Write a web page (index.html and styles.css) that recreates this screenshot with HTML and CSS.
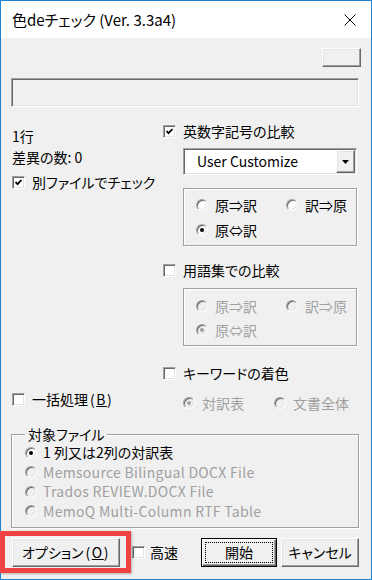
FILE: index.html
```html
<!DOCTYPE html>
<html lang="ja">
<head>
<meta charset="utf-8">
<title>色deチェック</title>
<link rel="stylesheet" href="styles.css">
</head>
<body>
<div class="window">
  <div class="titlebar">
    <span class="title">色deチェック (Ver. 3.3a4)</span>
    <svg class="close" viewBox="0 0 12 12"><path d="M0.5 0.5L11.5 11.5M11.5 0.5L0.5 11.5" stroke="#000" stroke-width="1"/></svg>
  </div>
  <div class="content">
    <div class="btn-small raised"></div>
    <div class="status sunken"></div>
    <div class="main">
      <div class="left">
        <div class="line first">1行</div>
        <div class="line second">差異の数: 0</div>
        <div class="chk sep"><span class="box"><svg viewBox="0 0 11 11"><polyline points="2.5,5 4.5,7.2 8.5,3" fill="none" stroke="#000" stroke-width="1.8"/></svg></span><span>別ファイルでチェック</span></div>
      </div>
      <div class="right">
        <div class="chk"><span class="box"><svg viewBox="0 0 11 11"><polyline points="2.5,5 4.5,7.2 8.5,3" fill="none" stroke="#000" stroke-width="1.8"/></svg></span><span>英数字記号の比較</span></div>
        <div class="combo sunken">
          <span class="combo-text">User Customize</span>
          <span class="combo-btn raised"><svg viewBox="0 0 7 4" class="arrow"><polygon points="0,0 7,0 3.5,4" fill="#000"/></svg></span>
        </div>
        <div class="group">
          <div class="rrow"><span class="opt w90"><span class="radio"></span><span>原⇒訳</span></span><span class="opt"><span class="radio"></span><span>訳⇒原</span></span></div>
          <div class="rrow"><span class="opt"><span class="radio on"></span><span>原⇔訳</span></span></div>
        </div>
        <div class="chk gap15"><span class="box"></span><span>用語集での比較</span></div>
        <div class="group g2 dis">
          <div class="rrow"><span class="opt w90"><span class="radio"></span><span>原⇒訳</span></span><span class="opt"><span class="radio"></span><span>訳⇒原</span></span></div>
          <div class="rrow"><span class="opt"><span class="radio on"></span><span>原⇔訳</span></span></div>
        </div>
        <div class="chk gap18"><span class="box"></span><span>キーワードの着色</span></div>
      </div>
      <div class="chk batch"><span class="box"></span><span>一括処理<span class="paren">(<u>B</u>)</span></span></div>
      <div class="rrow color dis"><span class="opt w91"><span class="radio on"></span><span>対訳表</span></span><span class="opt"><span class="radio"></span><span>文書全体</span></span></div>
    </div>
    <fieldset class="files">
      <legend>対象ファイル</legend>
      <div class="frow"><span class="opt"><span class="radio on"></span><span>1 列又は2列の対訳表</span></span></div>
      <div class="frow dis"><span class="opt"><span class="radio"></span><span>Memsource Bilingual DOCX File</span></span></div>
      <div class="frow dis"><span class="opt"><span class="radio"></span><span>Trados REVIEW.DOCX File</span></span></div>
      <div class="frow dis"><span class="opt"><span class="radio"></span><span>MemoQ Multi-Column RTF Table</span></span></div>
    </fieldset>
    <div class="bottom">
      <div class="btn options raised"><span>オプション<span class="paren">(<u>O</u>)</span></span></div>
      <div class="chk speed"><span class="box"></span><span>高速</span></div>
      <div class="btn start"><span class="focus">開始</span></div>
      <div class="btn cancel raised"><span>キャンセル</span></div>
    </div>
  </div>
  <div class="highlight"></div>
</div>
</body>
</html>
```

FILE: styles.css
```css
* { box-sizing: border-box; }
html, body { margin: 0; padding: 0; }
body {
  width: 372px;
  height: 580px;
  overflow: hidden;
  font-family: "Noto Sans CJK JP", "Noto Sans", sans-serif;
  font-size: 14px;
  color: #000;
  font-feature-settings: "palt";
  background: #f0f0f0;
}
.window {
  position: relative;
  width: 372px;
  height: 580px;
  border: 1px solid #1883d7;
  background: #f0f0f0;
  display: flex;
  flex-direction: column;
}
.titlebar {
  height: 37px;
  flex: none;
  background: #fff;
  display: flex;
  align-items: center;
  padding-left: 11px;
}
.title { font-size: 15px; line-height: 20px; padding-top: 1px; }
.close { margin-left: auto; margin-right: 15px; width: 12px; height: 12px; }

.raised {
  background: #f0f0f0;
  border: 1px solid;
  border-color: #fff #696969 #696969 #fff;
  box-shadow: inset -1px -1px 0 #a0a0a0, inset 1px 1px 0 #e3e3e3;
}
.sunken {
  border: 1px solid;
  border-color: #a0a0a0 #fff #fff #a0a0a0;
  box-shadow: inset 1px 1px 0 #696969, inset -1px -1px 0 #e3e3e3;
}

.content {
  padding: 10px 12px 0 10px;
  display: flex;
  flex-direction: column;
}
.btn-small {
  align-self: flex-end;
  margin-right: -2px;
  width: 39px;
  height: 19px;
}
.status {
  margin-top: 11px;
  height: 29px;
  background: #f0f0f0;
}

.main {
  margin-top: 15px;
  display: grid;
  grid-template-columns: 152px 196px;
  row-gap: 8px;
}
.left { display: flex; flex-direction: column; }
.line { line-height: 17px; height: 17px; padding-left: 1px; }
.line.first { margin-top: 6px; }
.line.second { margin-top: 4px; }
.chk {
  display: flex;
  align-items: center;
  gap: 7px;
  height: 18px;
  line-height: 17px;
}
.chk.sep { margin-top: 7px; margin-left: 1px; }
.box {
  width: 13px;
  height: 13px;
  flex: none;
  background: #fff;
  border: 1px solid;
  border-color: #a0a0a0 #fff #fff #a0a0a0;
  box-shadow: inset 1px 1px 0 #696969, inset -1px -1px 0 #e3e3e3;
  display: flex;
}
.box svg { width: 11px; height: 11px; display: block; }
.paren { letter-spacing: 1.5px; margin-left: 2px; }

.right { display: flex; flex-direction: column; }
.combo {
  margin-top: 8px;
  margin-left: 20px;
  width: 174px;
  height: 27px;
  background: #fff;
  display: flex;
  align-items: center;
  padding: 1px;
}
.combo-text { flex: 1; padding-left: 12px; line-height: 17px; }
.combo-btn {
  width: 19px;
  height: 23px;
  display: flex;
  align-items: center;
  justify-content: center;
}
.arrow { width: 7px; height: 4px; display: block; }

.group {
  margin-top: 13px;
  margin-left: 20px;
  width: 174px;
  height: 58px;
  border: 1px solid #a0a0a0;
  box-shadow: 1px 1px 0 #fff, inset 1px 1px 0 #fff;
  padding: 7px 0 0 12px;
  display: flex;
  flex-direction: column;
  gap: 7px;
}
.group.g2 { margin-top: 9px; padding-top: 8px; gap: 6px; }
.gap15 { margin-top: 15px; }
.gap18 { margin-top: 18px; }

.rrow { display: flex; height: 18px; align-items: center; }
.opt {
  display: flex;
  align-items: center;
  gap: 7px;
  line-height: 17px;
  white-space: nowrap;
}
.w90 { width: 90px; }
.w91 { width: 91px; }
.dis { color: #a0a0a0; }

.radio {
  width: 12px;
  height: 12px;
  flex: none;
  border-radius: 50%;
  border: 1px solid;
  border-color: #a0a0a0 #fff #fff #a0a0a0;
  box-shadow: inset 1px 1px 0 #696969, inset -1px -1px 0 #e3e3e3;
  background: #fff;
  display: flex;
  align-items: center;
  justify-content: center;
}
.radio.on::after {
  content: "";
  width: 4px;
  height: 4px;
  border-radius: 50%;
  background: #000;
}
.dis .radio { background: #f0f0f0; }
.dis .radio.on::after { background: #a0a0a0; }

.batch { margin-left: 1px; align-self: start; }
.color { padding-left: 20px; margin-top: 4px; align-self: start; }

.files {
  margin: 14px 0 0 0;
  padding: 0 0 6px 13px;
  border: 1px solid #a0a0a0;
  box-shadow: 1px 1px 0 #fff, inset 1px 1px 0 #fff;
  min-width: 0;
}
.files legend {
  padding: 0 3px;
  line-height: 17px;
  background: #f0f0f0;
}
.frow { height: 19.5px; display: flex; align-items: center; }
.frow .opt { gap: 6px; }
.frow.dis { letter-spacing: 0.3px; }

.bottom {
  margin-top: 9.5px;
  display: flex;
  align-items: center;
  height: 29px;
}
.btn {
  height: 29px;
  display: flex;
  align-items: center;
  justify-content: center;
  line-height: 17px;
}
.options { width: 108px; margin-left: 1px; }
.speed { margin-left: 12px; gap: 5px; }
.start {
  margin-left: auto;
  width: 76px;
  border: 1px solid #000;
  background: #f0f0f0;
  box-shadow: inset 1px 1px 0 #fff, inset -1px -1px 0 #696969, inset -2px -2px 0 #a0a0a0;
  padding: 3px;
}
.focus {
  width: 100%;
  height: 100%;
  border: 1px dotted #000;
  display: flex;
  align-items: center;
  justify-content: center;
}
.cancel { width: 78px; margin-left: 4px; }

.highlight {
  position: absolute;
  left: -1px;
  top: 530px;
  width: 131px;
  height: 42px;
  border: 5px solid #ef4343;
  box-shadow: 1px 1px 2px rgba(0,0,0,0.25);
  pointer-events: none;
}
```
